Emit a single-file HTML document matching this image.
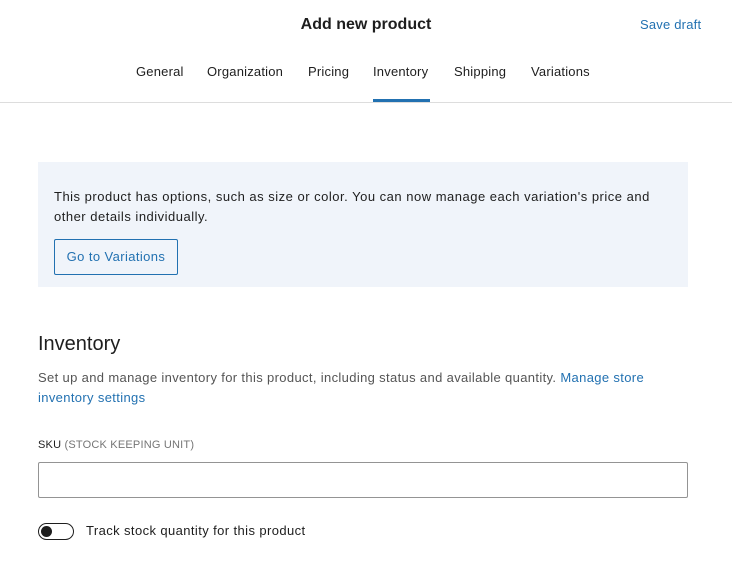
<!DOCTYPE html>
<html><head><style>
body{margin:0;width:732px;height:566px;background:#fff;font-family:"Liberation Sans",sans-serif;color:#1e1e1e;position:relative;overflow:hidden}
.a{position:absolute;white-space:nowrap}
.tab{position:absolute;top:64px;font-size:13px;color:#1e1e1e;letter-spacing:0.2px}
</style></head><body>
<div class="a" style="left:0;width:732px;top:16px;text-align:center;font-size:16px;font-weight:bold;">Add new product</div>
<div class="a" style="left:640px;top:17px;font-size:13px;color:#2271b1;letter-spacing:0.2px">Save draft</div>
<div class="tab" style="left:136px">General</div>
<div class="tab" style="left:207px">Organization</div>
<div class="tab" style="left:308px">Pricing</div>
<div class="tab" style="left:373px">Inventory</div>
<div class="tab" style="left:454px">Shipping</div>
<div class="tab" style="left:531px">Variations</div>
<div class="a" style="left:0;top:102px;width:732px;height:1px;background:#ddd"></div>
<div class="a" style="left:373px;top:99px;width:57px;height:3px;background:#2271b1"></div>
<div class="a" style="left:38px;top:162px;width:650px;height:125px;background:#f0f4fa"></div>
<div class="a" style="left:54px;top:187px;font-size:13px;line-height:20px;letter-spacing:0.5px">This product has options, such as size or color. You can now manage each variation's price and<br>other details individually.</div>
<div class="a" style="left:54px;top:239px;width:122px;height:34px;border:1px solid #2271b1;border-radius:2px;font-size:13px;color:#2271b1;line-height:34px;text-align:center;letter-spacing:0.4px">Go to Variations</div>
<div class="a" style="left:38px;top:333px;font-size:20px">Inventory</div>
<div class="a" style="left:38px;top:368px;font-size:13px;line-height:20px;color:#555;letter-spacing:0.35px">Set up and manage inventory for this product, including status and available quantity. <span style="color:#2271b1">Manage store</span><br><span style="color:#2271b1">inventory settings</span></div>
<div class="a" style="left:38px;top:439px;font-size:11px;color:#1e1e1e;letter-spacing:0.2px">SKU <span style="color:#757575">(STOCK KEEPING UNIT)</span></div>
<div class="a" style="left:38px;top:462px;width:648px;height:34px;border:1px solid #949494;border-radius:2px"></div>
<div class="a" style="left:38px;top:523px;width:34px;height:15px;border:1px solid #1e1e1e;border-radius:9px"></div>
<div class="a" style="left:41px;top:526px;width:11px;height:11px;border-radius:50%;background:#1e1e1e"></div>
<div class="a" style="left:86px;top:523px;font-size:13px;letter-spacing:0.4px">Track stock quantity for this product</div>
</body></html>
